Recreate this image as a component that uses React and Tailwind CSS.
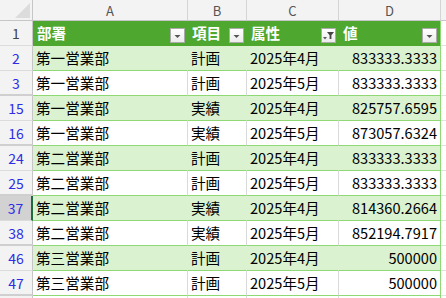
import React from 'react';

const rows = [
  { n: '2', a: '第一営業部', b: '計画', c: '2025年4月', d: '833333.3333' },
  { n: '3', a: '第一営業部', b: '計画', c: '2025年5月', d: '833333.3333', gap: true },
  { n: '15', a: '第一営業部', b: '実績', c: '2025年4月', d: '825757.6595' },
  { n: '16', a: '第一営業部', b: '実績', c: '2025年5月', d: '873057.6324', gap: true },
  { n: '24', a: '第二営業部', b: '計画', c: '2025年4月', d: '833333.3333' },
  { n: '25', a: '第二営業部', b: '計画', c: '2025年5月', d: '833333.3333', gap: true },
  { n: '37', a: '第二営業部', b: '実績', c: '2025年4月', d: '814360.2664', active: true },
  { n: '38', a: '第二営業部', b: '実績', c: '2025年5月', d: '852194.7917', gap: true },
  { n: '46', a: '第三営業部', b: '計画', c: '2025年4月', d: '500000' },
  { n: '47', a: '第三営業部', b: '計画', c: '2025年5月', d: '500000', gap: true },
];

// 列幅 (行番号, A, B, C, D)
const W = ['w-[33px]', 'w-[155px]', 'w-[59px]', 'w-[92px]', 'w-[102px]'];

function FilterButton({ filtered }) {
  return (
    <div className="ml-auto mt-[3px] w-[15px] h-[15px] shrink-0 border border-[#ababab] bg-gradient-to-b from-white to-[#ececec] flex items-center justify-center">
      {filtered ? (
        <svg width="13" height="13" viewBox="0 0 13 13">
          <path d="M1 8 L5 8 L3 10.5 Z" fill="#5a5a5a" />
          <path d="M5 3 L12 3 L9.4 6.2 L9.4 10 L7.6 10 L7.6 6.2 Z" fill="#444" />
        </svg>
      ) : (
        <svg width="9" height="9" viewBox="0 0 9 9">
          <path d="M1.5 4 L7.5 4 L4.5 7 Z" fill="#555" />
        </svg>
      )}
    </div>
  );
}

function ColHeaders() {
  const letters = ['A', 'B', 'C', 'D'];
  return (
    <div className="flex h-[21px]">
      <div className={`${W[0]} h-full shrink-0 bg-[#f3f3f3] border-r border-b border-[#c6c6c6] relative`}>
        <svg className="absolute right-[2px] bottom-[2px]" width="15" height="15" viewBox="0 0 15 15">
          <path d="M15 0 L15 15 L0 15 Z" fill="#dcdcdc" />
        </svg>
      </div>
      {letters.map((l, i) => (
        <div
          key={l}
          className={`${W[i + 1]} h-full shrink-0 bg-[#f3f3f3] border-r border-b border-[#d4d4d4] border-b-[#c6c6c6] flex items-center justify-center text-[13px] text-[#555]`}
        >
          {l}
        </div>
      ))}
      <div className="flex-1 h-full bg-[#f3f3f3] border-b border-[#c6c6c6]" />
    </div>
  );
}

function HeaderRow() {
  const titles = [
    { t: '部署' },
    { t: '項目' },
    { t: '属性', filtered: true },
    { t: '値' },
  ];
  return (
    <div className="flex h-[25px]">
      <div className={`${W[0]} shrink-0 bg-[#f3f3f3] border-r border-[#c6c6c6] border-b border-b-[#dcdcdc] flex items-center justify-center text-[14px] text-[#444]`}>
        1
      </div>
      {titles.map((h, i) => (
        <div
          key={h.t}
          className={`${W[i + 1]} shrink-0 bg-[#4ea72e] flex items-center pl-[4px] pr-[3px] text-white font-bold text-[14.6px] ${i === 3 ? 'border-r border-[#8ed973]' : ''}`}
        >
          <span className="leading-none">{h.t}</span>
          <FilterButton filtered={h.filtered} />
        </div>
      ))}
      <div className="flex-1 bg-white border-b border-[#e1e1e1]" />
    </div>
  );
}

function DataRow({ row, band }) {
  const fill = band ? 'bg-[#daf2d0]' : 'bg-white';
  const vline = band ? 'border-r-[#daf2d0]' : 'border-r-[#dadada]';
  return (
    <div className="flex h-[25px]">
      <div
        className={`${W[0]} shrink-0 flex items-center justify-center text-[14px] text-[#2d2de6] border-r ${
          row.active ? 'bg-[#d2d2d2] border-r-2 border-r-[#1e6c3d]' : 'bg-[#f3f3f3] border-r-[#c6c6c6]'
        } ${row.gap ? 'border-b-2 border-b-[#cfcfcf]' : 'border-b border-b-[#dcdcdc]'}`}
      >
        {row.n}
      </div>
      <div className={`${W[1]} shrink-0 ${fill} border-b border-b-[#8ed973] border-r ${vline} flex items-center pl-[3px]`}>
        {row.a}
      </div>
      <div className={`${W[2]} shrink-0 ${fill} border-b border-b-[#8ed973] border-r ${vline} flex items-center pl-[3px]`}>
        {row.b}
      </div>
      <div className={`${W[3]} shrink-0 ${fill} border-b border-b-[#8ed973] border-r ${vline} flex items-center pl-[3px]`}>
        {row.c}
      </div>
      <div className={`${W[4]} shrink-0 ${fill} border-b border-b-[#8ed973] border-r border-r-[#8ed973] flex items-center justify-end pr-[3px]`}>
        {row.d}
      </div>
      <div className="flex-1 bg-white border-b border-[#e1e1e1]" />
    </div>
  );
}

export default function App() {
  return (
    <div className="w-[446px] h-[298px] overflow-hidden bg-white font-['Noto_Sans_CJK_JP','Noto_Sans',sans-serif] text-[14.6px] text-black leading-none">
      <ColHeaders />
      <HeaderRow />
      {rows.map((row, i) => (
        <DataRow key={row.n} row={row} band={i % 2 === 0} />
      ))}
      <DataRow row={{ n: '', a: '', b: '', c: '', d: '' }} band={false} />
    </div>
  );
}
